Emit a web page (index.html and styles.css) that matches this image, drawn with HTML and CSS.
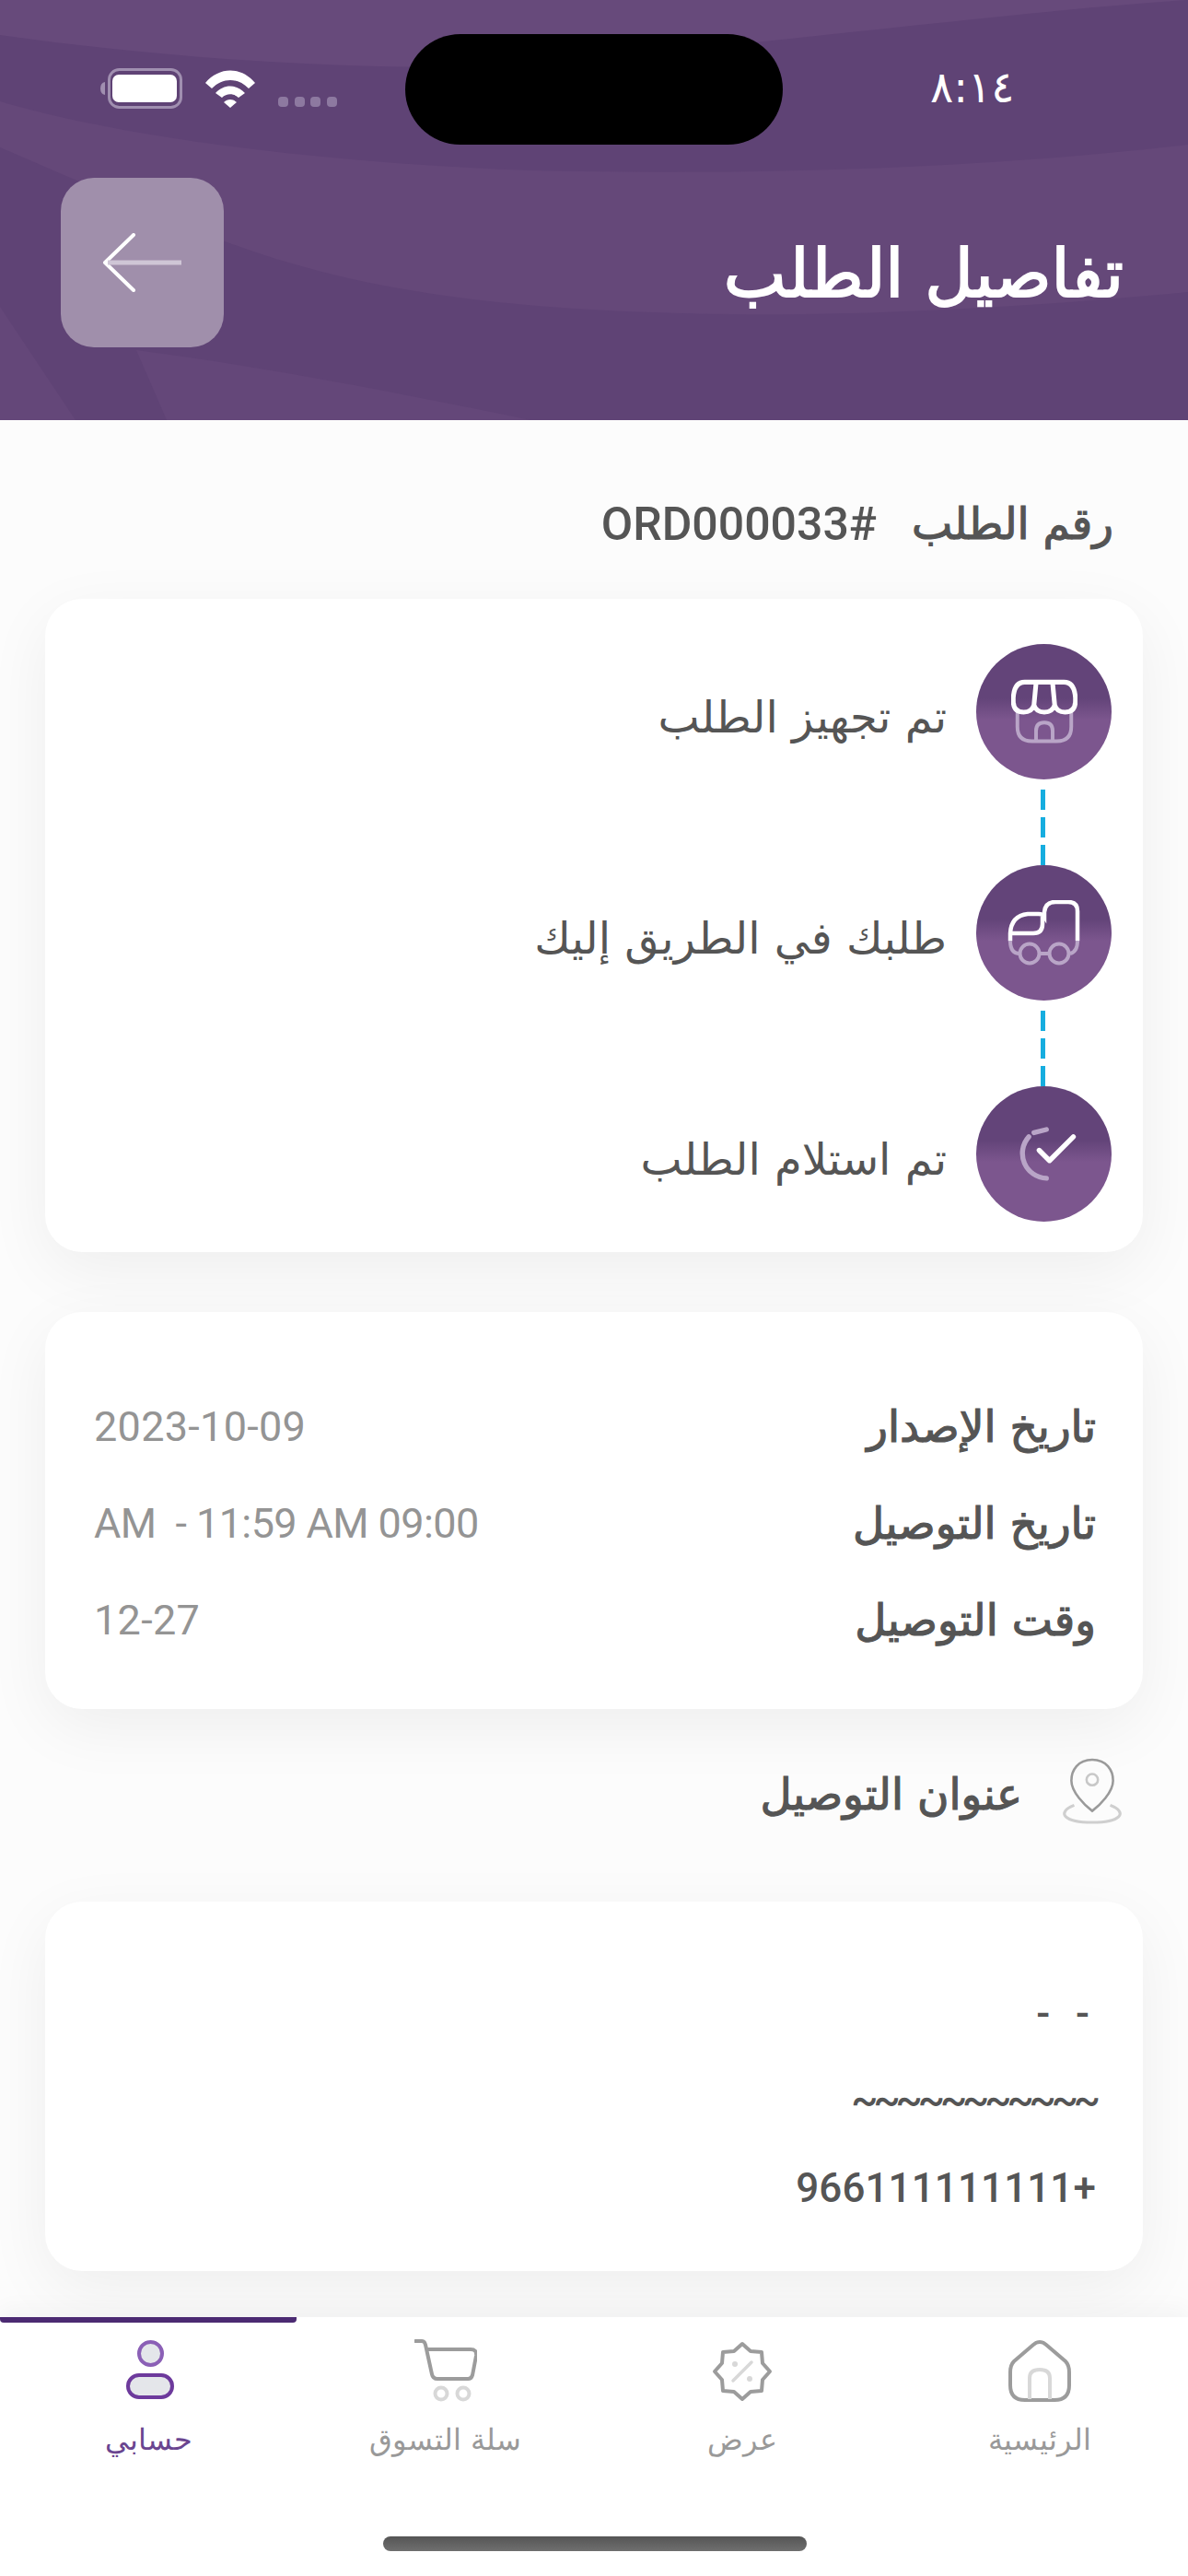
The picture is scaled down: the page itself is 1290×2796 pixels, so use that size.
FILE: index.html
```html
<!DOCTYPE html>
<html lang="ar" dir="rtl">
<head>
<meta charset="utf-8">
<title>تفاصيل الطلب</title>
<link rel="stylesheet" href="styles.css">
</head>
<body>
<div class="screen">
  <header class="hero">
    <svg class="waves" viewBox="0 0 1290 456" preserveAspectRatio="none" aria-hidden="true">
      <path d="M0 0H1290C1060 14 620 78 411 72C260 68 120 55 0 38Z" fill="#674a7b"/>
      <path d="M0 110C100 140 300 175 576 185C800 190 1050 185 1290 157V317C1100 335 900 345 740 340C560 335 400 320 247 263C150 225 70 190 0 160Z" fill="#654879"/>
      <path d="M148 380C300 400 450 430 576 456H181Z" fill="#644779"/>
      <path d="M0 333L82 456H0Z" fill="#644779"/>
    </svg>
    <div class="status">
      <div class="status-left">
        <svg class="battery" viewBox="0 0 90 44"><rect x="10.5" y="1.5" width="78" height="41" rx="11" fill="none" stroke="#a08fb0" stroke-width="3"/><path d="M1 22q0-6 5-7v14q-5-1-5-7z" fill="#a08fb0"/><rect x="14" y="7" width="70" height="30" rx="7" fill="#fff"/></svg>
        <svg class="wifi" viewBox="0 0 54 42"><path d="M0 15C15 -3 39 -3 54 15L47 21C35 9 19 9 7 21Z" fill="#fff"/><path d="M11 26C20 16 34 16 43 26L36 31C31 26 23 26 18 31Z" fill="#fff"/><path d="M20 36C24 32 30 32 34 36L27 42Z" fill="#fff"/></svg>
        <div class="signal"><i></i><i></i><i></i><i></i></div>
      </div>
      <div class="island"></div>
      <div class="clock">٨:١٤</div>
    </div>
    <div class="titlebar">
      <h1 class="title">تفاصيل الطلب</h1>
      <button class="back" aria-label="رجوع">
        <svg viewBox="0 0 88 64"><path d="M34 2L3 32L34 62" fill="none" stroke="#fff" stroke-width="4" stroke-linecap="round" stroke-linejoin="round"/><path d="M6 32H86" stroke="#cfc6d6" stroke-width="5"/></svg>
      </button>
    </div>
  </header>

  <main class="content">
    <div class="order-no"><span class="strong">رقم الطلب</span><span class="order-code">#ORD000033</span></div>

    <section class="card steps">
      <div class="step">
        <div class="bubble">
          <svg viewBox="0 0 64 64"><path d="M6 32V46Q6 60 20 60H44Q58 60 58 46V32" fill="none" stroke="#b9a5c7" stroke-width="3.5"/><path d="M24 59V50Q24 42 32 42T40 50V59" fill="none" stroke="#b9a5c7" stroke-width="3.5"/><path d="M13 3H51Q61 3 62 18V21Q62 32 52 32Q44 32 42 25Q40 32 32 32Q24 32 22 25Q20 32 12 32Q2 32 2 21V18Q3 3 13 3ZM24 4L22 25M40 4L42 25" fill="none" stroke="#fff" stroke-width="4.5" stroke-linejoin="round"/></svg>
        </div>
        <p class="step-text">تم تجهيز الطلب</p>
      </div>
      <div class="dash"></div>
      <div class="step">
        <div class="bubble">
          <svg class="truck" viewBox="0 0 80 72"><path d="M3 44V36Q4 17 22 15H34Q38 15 40 18V13Q41 2 52 2H66Q76 2 76 12V44" fill="none" stroke="#fff" stroke-width="4.5" stroke-linecap="round"/><path d="M3 36H28Q38 36 38 26V18" fill="none" stroke="#fff" stroke-width="4.5"/><path d="M3 44Q3 58 13 58M76 44Q76 56 68 58M34 58H46" fill="none" stroke="#b9a5c7" stroke-width="4"/><circle cx="24" cy="58" r="10.5" fill="none" stroke="#b9a5c7" stroke-width="4"/><circle cx="56" cy="58" r="10.5" fill="none" stroke="#b9a5c7" stroke-width="4"/></svg>
        </div>
        <p class="step-text">طلبك في الطريق إليك</p>
      </div>
      <div class="dash"></div>
      <div class="step">
        <div class="bubble">
          <svg viewBox="0 0 64 64"><path d="M22 11L34 8M17 15A24 24 0 0 0 34 55" fill="none" stroke="#b9a5c7" stroke-width="4.8" stroke-linecap="round"/><path d="M27 28L37 38L60 15" fill="none" stroke="#fff" stroke-width="4.8" stroke-linecap="round" stroke-linejoin="round"/></svg>
        </div>
        <p class="step-text">تم استلام الطلب</p>
      </div>
    </section>

    <section class="card info">
      <div class="info-row"><span class="strong">تاريخ الإصدار</span><bdi class="info-value">2023-10-09</bdi></div>
      <div class="info-row"><span class="strong">تاريخ التوصيل</span><bdi class="info-value tight" dir="ltr">AM&nbsp; - 11:59 AM 09:00</bdi></div>
      <div class="info-row"><span class="strong">وقت التوصيل</span><bdi class="info-value">12-27</bdi></div>
    </section>

    <div class="addr-head">
      <svg viewBox="0 0 70 70"><path d="M35 2C20 2 13 13 13 24C13 36 27 50 35 56C43 50 57 36 57 24C57 13 50 2 35 2Z" fill="none" stroke="#9a9a9a" stroke-width="2.5"/><circle cx="35" cy="23" r="6" fill="none" stroke="#c8c8c8" stroke-width="2.5"/><path d="M16 50C-4 58 6 68 35 68S74 58 54 50" fill="none" stroke="#cfcfcf" stroke-width="3"/></svg>
      <span class="strong">عنوان التوصيل</span>
    </div>

    <section class="card address">
      <p class="addr-line dashes">-&nbsp;&nbsp;-&nbsp;</p>
      <p class="addr-line tildes">~~~~~~~~~~~</p>
      <p class="addr-line phone">+966111111111</p>
    </section>
  </main>

  <nav class="tabs">
    <a class="tab">
      <svg viewBox="0 0 68 72"><path d="M6 24L27 6Q34 0 41 6L62 24Q66 28 66 36V50Q66 66 50 66H18Q2 66 2 50V36Q2 28 6 24Z" fill="none" stroke="#9c9c9c" stroke-width="4"/><path d="M23 65V42Q23 33 34 33T45 42V65" fill="none" stroke="#d8d8d8" stroke-width="4"/></svg>
      <span>الرئيسية</span>
    </a>
    <a class="tab">
      <svg viewBox="-2 -3 68 72"><path d="M32 2L41 10L53 11L54 23L62 32L54 41L53 53L41 54L32 62L23 54L11 53L10 41L2 32L10 23L11 11L23 10Z" fill="none" stroke="#9c9c9c" stroke-width="4" stroke-linejoin="round"/><path d="M22 42L42 22" stroke="#d8d8d8" stroke-width="3.5" stroke-linecap="round"/><circle cx="24" cy="24" r="3" fill="#d8d8d8"/><circle cx="40" cy="40" r="3" fill="#d8d8d8"/></svg>
      <span>عرض</span>
    </a>
    <a class="tab">
      <svg viewBox="0 0 68 72"><path d="M1 2H8Q11 2 12 6L19 38Q20 43 25 43H58Q62 43 63 39L67 18Q68 11 61 11H14" fill="none" stroke="#9c9c9c" stroke-width="4" stroke-linecap="round"/><circle cx="29" cy="59" r="6.5" fill="none" stroke="#d8d8d8" stroke-width="4"/><circle cx="53" cy="59" r="6.5" fill="none" stroke="#d8d8d8" stroke-width="4"/></svg>
      <span>سلة التسوق</span>
    </a>
    <a class="tab active">
      <svg viewBox="0 0 68 72"><circle cx="36.5" cy="15.5" r="12.5" fill="#e4e6ea" stroke="#8b60b6" stroke-width="4"/><rect x="12" y="39" width="48" height="24" rx="12" fill="#e4e6ea" stroke="#6d3a9c" stroke-width="4"/></svg>
      <span>حسابي</span>
    </a>
  </nav>
  <div class="home-bar"></div>
</div>
</body>
</html>
```
FILE: styles.css
```css
* { box-sizing: border-box; }
html, body { margin: 0; padding: 0; }
body { font-family: "DejaVu Sans", "Noto Sans", sans-serif; background: #fff; }
.screen { width: 1290px; height: 2796px; display: flex; flex-direction: column; overflow: hidden; background: #fcfcfc; }

.hero { position: relative; height: 456px; background: #5f4375; padding: 0 70px 0 66px; flex: none; }
.waves { position: absolute; inset: 0; width: 100%; height: 100%; }
.status { position: relative; direction: ltr; display: flex; align-items: flex-start; height: 193px; }
.status-left { width: 374px; padding: 74px 0 0 42px; display: flex; align-items: flex-start; gap: 25px; }
.battery { width: 90px; height: 44px; }
.wifi { width: 54px; height: 42px; margin-top: 1px; }
.signal { display: flex; gap: 6.5px; margin-top: 31px; }
.signal i { width: 11px; height: 11px; border-radius: 4px; background: #8d79a0; }
.island { width: 410px; height: 120px; margin-top: 37px; border-radius: 60px; background: #000; }
.clock { margin: 68px 0 0 160px; font-size: 47px; color: #fff; line-height: 54px; }
.titlebar { position: relative; display: flex; justify-content: space-between; align-items: flex-start; }
.title { margin: 62px 0 0; color: #fff; font-size: 72px; font-weight: 400; -webkit-text-stroke: 2px #fff; line-height: 84px; }
.back { width: 177px; height: 184px; padding: 0; border: 0; border-radius: 36px; background: #a08fab; display: flex; align-items: center; justify-content: center; }
.back svg { width: 88px; height: 64px; }

.content { flex: 1; padding: 0 49px; }
.strong { color: #555; font-size: 47px; font-weight: 400; -webkit-text-stroke: 1.2px #555; line-height: 60px; }
.order-no { display: flex; align-items: center; gap: 38px; height: 194px; padding: 32px 32px 0 0; }
.order-code { color: #555; font-family: "Roboto", sans-serif; font-size: 50px; font-weight: 500; line-height: 60px; }

.card { background: #fff; border-radius: 40px; box-shadow: 0 20px 70px rgba(0,0,0,.06); }
.steps { height: 709px; padding: 49px 34px 0 0; }
.step { display: flex; align-items: center; gap: 32px; height: 147px; }
.bubble { width: 147px; height: 147px; flex: none; border-radius: 50%; background: linear-gradient(#634479 0 40%, #7c568e 56%); display: flex; align-items: center; justify-content: center; }
.bubble svg { width: 72px; height: 72px; }
.bubble .truck { width: 80px; }
.step-text { margin: 10px 0 0; color: #555; font-size: 48px; line-height: 60px; }
.dash { width: 5px; height: 93px; margin-right: 72px; padding-top: 11px; background: repeating-linear-gradient(#16addf 0 22px, transparent 22px 30px) content-box; background-origin: content-box; }

.info { margin-top: 65px; height: 431px; padding: 72px 51px 0 53px; }
.info-row { display: flex; justify-content: space-between; align-items: center; height: 105px; }
.info-value { color: #949494; font-family: "Roboto", sans-serif; font-size: 45px; letter-spacing: .3px; }
.tight { letter-spacing: -.6px; }

.addr-head { display: flex; align-items: center; gap: 40px; height: 209px; padding: 0 19px 24px 0; }
.addr-head svg { width: 72px; height: 72px; flex: none; margin-top: -7px; }

.address { height: 401px; padding: 74px 51px 0; }
.addr-line { margin: 0; height: 95px; color: #555; font-family: "Roboto", sans-serif; font-size: 44px; font-weight: 500; line-height: 95px; }
.dashes { letter-spacing: 2px; padding-right: 5px; }
.tildes { letter-spacing: -5px; }
.phone { letter-spacing: .1px; }

.tabs { position: relative; flex: none; height: 156px; background: #fff; box-shadow: 0 -8px 24px rgba(0,0,0,.04); display: grid; grid-template-columns: repeat(4, 1fr); padding-top: 24px; }
.tabs::after { content: ""; position: absolute; left: 0; top: 0; width: 322px; height: 6px; border-radius: 0 0 4px 4px; background: #4b2a72; }
.tab { display: flex; flex-direction: column; align-items: center; gap: 18px; color: #999; font-size: 32px; font-weight: 200; }
.tab svg { width: 68px; height: 72px; }
.active { color: #6a4590; }
.home-bar { flex: none; height: 125px; background: #fff; position: relative; }
.home-bar::after { content: ""; position: absolute; left: 416px; top: 82px; width: 460px; height: 16px; border-radius: 8px; background: linear-gradient(#555, #6f6f6f); }
```
